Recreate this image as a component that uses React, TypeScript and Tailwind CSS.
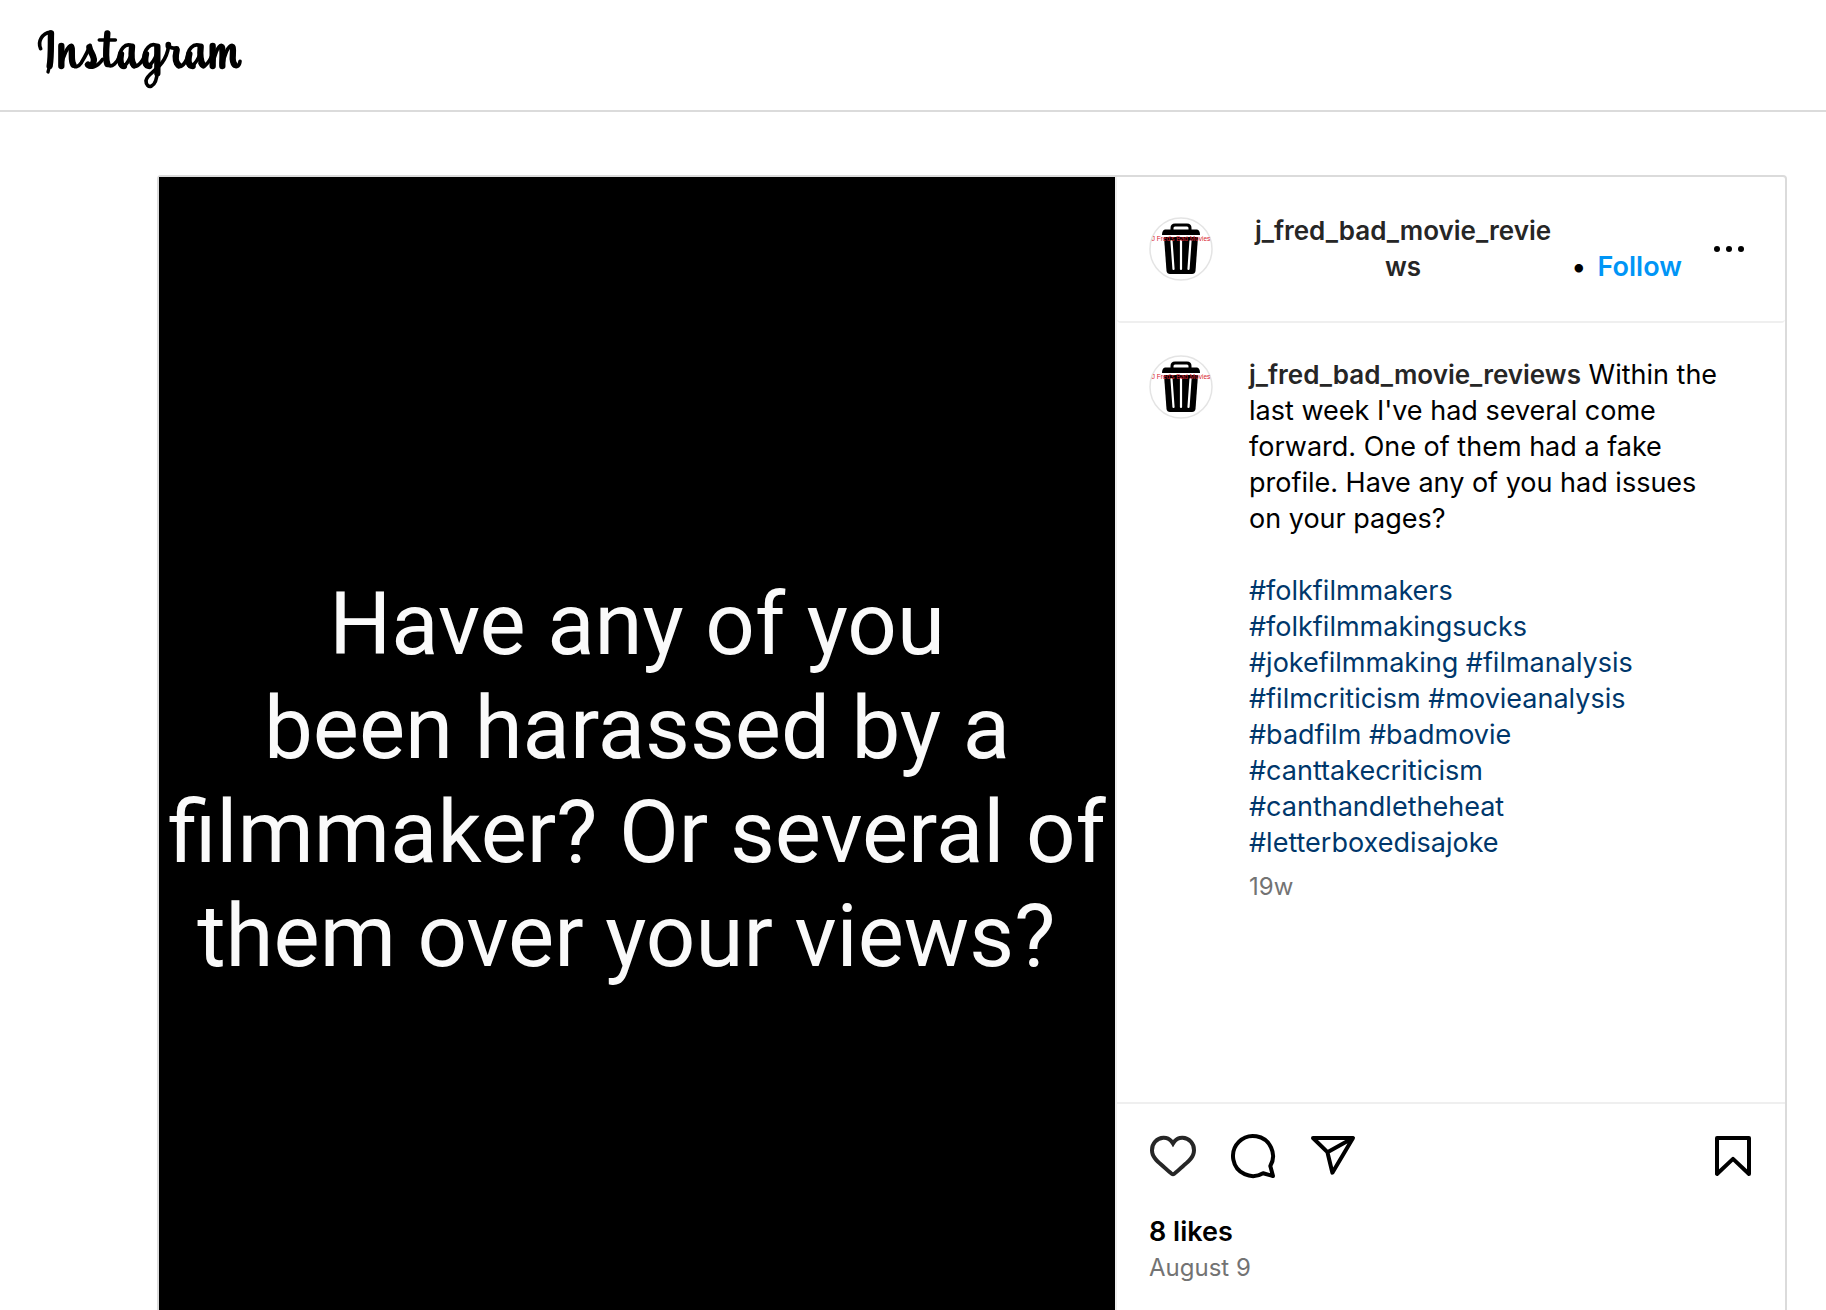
import React from "react";

const HASHTAG_LINES = [
  ["#folkfilmmakers"],
  ["#folkfilmmakingsucks"],
  ["#jokefilmmaking", "#filmanalysis"],
  ["#filmcriticism", "#movieanalysis"],
  ["#badfilm", "#badmovie"],
  ["#canttakecriticism"],
  ["#canthandletheheat"],
  ["#letterboxedisajoke"],
];

/* Brush-script logo: light connecting strokes with heavier down strokes on top. */
function Wordmark() {
  return (
    <svg viewBox="0 0 720 270" className="h-[90px] w-[240px]" role="img" aria-label="Instagram">
      <g fill="none" stroke="#000" strokeLinecap="round" strokeLinejoin="round">
        <g strokeWidth="11">
          <path d="M92 66C66 70 52 94 62 116" />
          <path d="M124 166C128 140 144 106 154 106C164 108 156 140 158 158C162 178 176 170 184 158C196 138 204 124 210 106" />
          <path d="M200 164C210 178 232 172 248 148M238 90H286" />
          <path d="M262 164C276 176 292 156 298 140" />
          <path d="M336 108C316 96 298 120 298 146C298 184 320 174 336 128M334 160C342 180 362 164 372 142" />
          <path d="M412 108C392 94 372 120 372 146C372 184 396 170 412 128M412 180C410 240 378 238 378 212C380 186 436 178 446 108" />
          <path d="M446 106C450 120 466 112 472 114M468 160C476 180 494 166 502 142" />
          <path d="M542 108C520 96 502 120 502 146C502 184 526 170 542 128M540 160C548 180 566 160 576 136" />
          <path d="M578 166C582 138 594 106 604 106M608 166C612 138 624 106 636 106M640 158C644 176 658 172 660 154" />
        </g>
        <g strokeWidth="19">
          <path d="M93 70C92 100 94 140 89 168" />
          <path d="M124 108V168M154 116C158 130 152 150 160 164" />
          <path d="M208 112C210 128 228 142 220 158C216 168 208 168 204 164" />
          <path d="M262 70C260 104 254 142 262 162" />
          <path d="M303 132C298 158 304 168 312 168M336 110C334 130 332 154 342 166" />
          <path d="M378 132C372 158 378 168 388 168M412 110V190" />
          <path d="M470 120C466 138 466 158 476 166" />
          <path d="M508 132C502 158 508 168 518 168M542 110C540 130 540 154 550 166" />
          <path d="M578 108V168M606 112C610 130 606 150 607 168M638 112C642 130 632 152 644 164" />
        </g>
        <path d="M89 166L84 186" strokeWidth="10" />
        <path d="M445 104V108" strokeWidth="17" />
      </g>
    </svg>
  );
}

function Avatar() {
  return (
    <a href="#profile" aria-label="j_fred_bad_movie_reviews profile" className="block size-16 shrink-0">
      <svg viewBox="0 0 64 64" className="size-16" aria-hidden="true">
        <circle cx="32" cy="32" r="31" fill="#fff" stroke="#e4e4e4" strokeWidth="1.5" />
        <path d="M23 13V11Q23 8 26 8H38Q41 8 41 11V13" fill="none" stroke="#000" strokeWidth="3" />
        <path d="M16 12.500H48Q51 13 51 18H13Q13 13 16 12.500Z" />
        <path d="M15 20H49L46.500 54Q46 57 43 57H21Q18 57 17.500 54Z" />
        <path d="M22.500 24L24.500 52M32 24V52M41.500 24L39.500 52" stroke="#fff" strokeWidth="2.200" strokeLinecap="round" />
        <text x="32" y="24" textAnchor="middle" fontSize="6.500" fill="#d8232f" fontFamily="Liberation Sans, Arial, sans-serif">
          J Fred's Bad Movies
        </text>
      </svg>
    </a>
  );
}

export default function App() {
  return (
    <div className="h-screen overflow-hidden bg-white font-['Inter',sans-serif] text-[27px] leading-9 text-black">
      <header className="flex h-28 items-center border-b-2 border-[#dbdbdb] px-5">
        <a href="#home">
          <Wordmark />
        </a>
      </header>

      <main className="pt-[63px] pr-[39px] pl-[157px]">
        <article className="flex rounded border-2 border-[#dbdbdb]">
          <div className="flex min-h-[1206px] flex-1 items-center justify-center bg-black">
            <p className="text-center font-['Roboto',sans-serif] text-[87px] leading-[104px] whitespace-nowrap text-[#fafafa]">
              Have any of you
              <br />
              been harassed by a
              <br />
              filmmaker? Or several of
              <br />
              them over your views?&nbsp;
            </p>
          </div>

          <div className="flex w-[670px] shrink-0 flex-col border-l-2 border-[#efefef]">
            <div className="flex h-[146px] items-center rounded-b border-b-2 border-[#efefef] pr-9 pl-8">
              <Avatar />
              <div className="ml-[41px] flex flex-1 items-end font-semibold">
                <a href="#profile" className="w-[298px] text-center text-[26px] text-[#262626]">
                  j_fred_bad_movie_revie
                  <br />
                  ws
                </a>
                <span className="ml-5">•</span>
                <button type="button" className="ml-3 text-[#0095f6]">
                  Follow
                </button>
              </div>
              <button type="button" aria-label="More options" className="p-1">
                <svg viewBox="0 0 32 8" className="h-2 w-8" aria-hidden="true">
                  <circle cx="4" cy="4" r="3" />
                  <circle cx="16" cy="4" r="3" />
                  <circle cx="28" cy="4" r="3" />
                </svg>
              </button>
            </div>

            <div className="flex h-[779px] items-start px-8 pt-8">
              <Avatar />
              <div className="ml-9 pt-0.5">
                <p>
                  <a href="#profile" className="text-[26px] font-semibold text-[#262626]">
                    j_fred_bad_movie_reviews
                  </a>{" "}
                  Within the
                  <br />
                  last week I've had several come
                  <br />
                  forward. One of them had a fake
                  <br />
                  profile. Have any of you had issues
                  <br />
                  on your pages?
                </p>
                <p className="mt-9 text-[#00376b]">
                  {HASHTAG_LINES.map((line) => (
                    <span key={line[0]} className="block">
                      {line.map((tag, i) => (
                        <React.Fragment key={tag}>
                          {i > 0 && " "}
                          <a href="#tag">{tag}</a>
                        </React.Fragment>
                      ))}
                    </span>
                  ))}
                </p>
                <time className="mt-2 block text-2xl leading-9 text-[#737373]">19w</time>
              </div>
            </div>

            <div className="flex-1 border-t-2 border-[#efefef] px-8 pt-7">
              <div className="flex items-center gap-8">
                <button type="button" aria-label="Like">
                  <svg viewBox="0 0 24 24" className="size-12" fill="#262626">
                    <path d="M16.792 3.904A4.989 4.989 0 0 1 21.500 9.122c0 3.072-2.652 4.959-5.197 7.222-2.512 2.243-3.865 3.469-4.303 3.752-.477-.309-2.143-1.823-4.303-3.752C5.141 14.072 2.500 12.167 2.500 9.122a4.989 4.989 0 0 1 4.708-5.218 4.210 4.210 0 0 1 3.675 1.941c.84 1.175.98 1.763 1.120 1.763s.278-.588 1.110-1.766a4.170 4.170 0 0 1 3.679-1.938m0-2a6.040 6.040 0 0 0-4.797 2.127 6.052 6.052 0 0 0-4.787-2.127A6.985 6.985 0 0 0 .5 9.122c0 3.610 2.550 5.827 5.015 7.970.283.246.569.494.853.747l1.027.918a44.998 44.998 0 0 0 3.518 3.018 2 2 0 0 0 2.174 0 45.263 45.263 0 0 0 3.626-3.115l.922-.824c.293-.26.59-.519.885-.774 2.334-2.025 4.980-4.320 4.980-7.940a6.985 6.985 0 0 0-6.708-7.218Z" />
                  </svg>
                </button>
                <button type="button" aria-label="Comment">
                  <svg viewBox="0 0 24 24" className="size-12" fill="none" stroke="#000" strokeWidth="2" strokeLinejoin="round">
                    <path d="M20.656 17.008a9.993 9.993 0 1 0-3.590 3.615L22 22Z" />
                  </svg>
                </button>
                <button type="button" aria-label="Share">
                  <svg viewBox="0 0 24 24" className="size-12" fill="none" stroke="#000" strokeWidth="2" strokeLinejoin="round">
                    <path d="M22 3L9.218 10.083M11.698 20.334L22 3.001H2L9.218 10.084Z" />
                  </svg>
                </button>
                <button type="button" aria-label="Save" className="-mr-1 ml-auto">
                  <svg viewBox="0 0 24 24" className="size-12" fill="none" stroke="#000" strokeWidth="2" strokeLinejoin="round" strokeLinecap="round">
                    <path d="M20 21L12 13.440L4 21V3H20Z" />
                  </svg>
                </button>
              </div>
              <p className="mt-[34px] font-semibold">8 likes</p>
              <time className="block text-2xl leading-9 text-[#737373]">August 9</time>
            </div>
          </div>
        </article>
      </main>
    </div>
  );
}
